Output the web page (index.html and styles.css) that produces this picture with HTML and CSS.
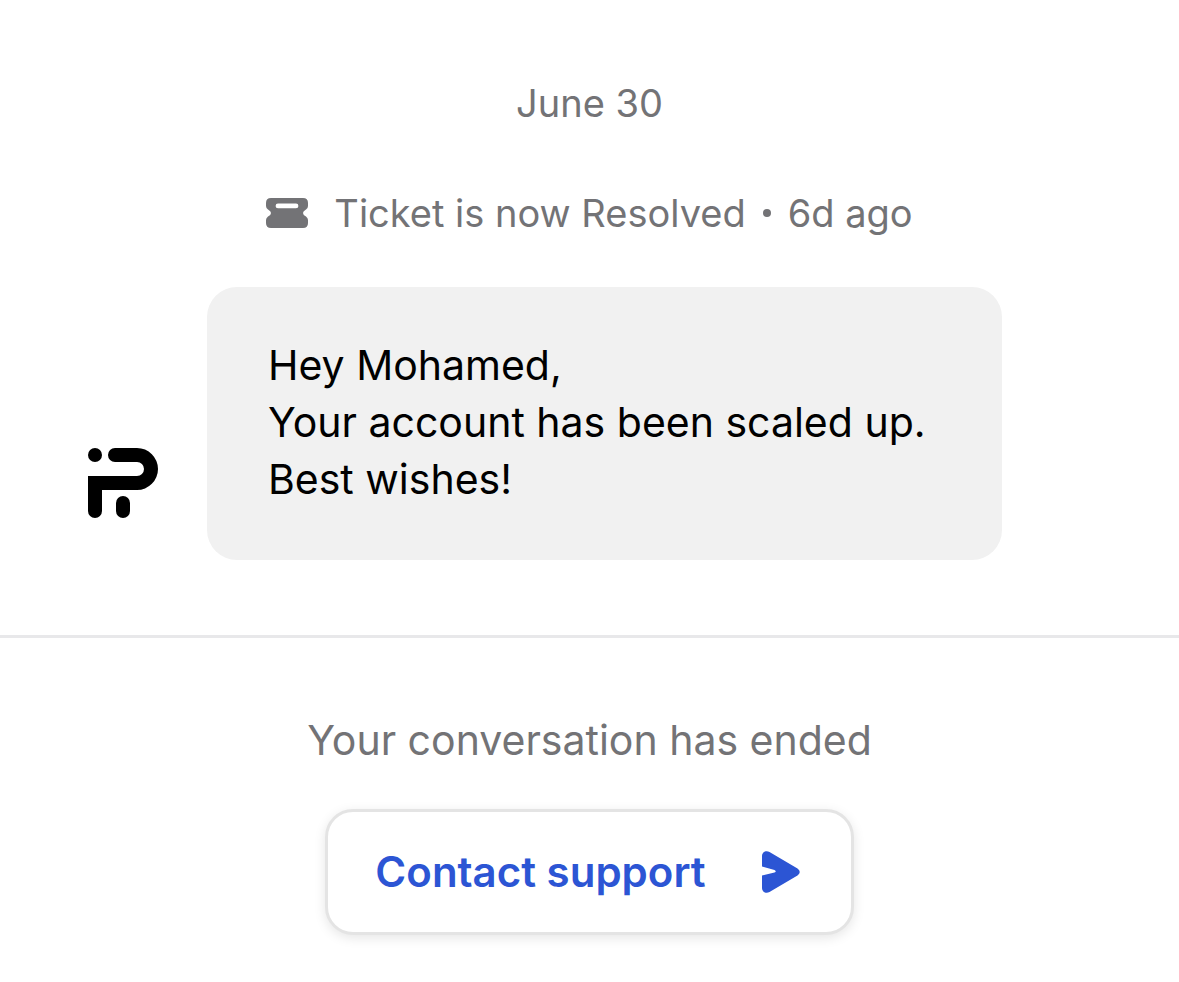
FILE: index.html
```html
<!DOCTYPE html>
<html lang="en">
<head>
    <meta charset="UTF-8">
    <meta name="viewport" content="width=device-width, initial-scale=1.0">
    <title>Support conversation</title>
    <link rel="stylesheet" href="styles.css">
</head>
<body>
    <main class="conversation">
        <p class="date">June 30</p>

        <p class="status">
            <svg class="ticket-icon" viewBox="0 0 42 30" aria-hidden="true">
                <path fill="currentColor" fill-rule="evenodd" d="M5 0H37Q42 0 42 5V8Q42 10 40 11.500Q37 13 37 15T40 18.500Q42 20 42 22V25Q42 30 37 30H5Q0 30 0 25V22Q0 20 2 18.500Q5 17 5 15T2 11.500Q0 10 0 8V5Q0 0 5 0ZM12 5.500A2.400 2.400 0 0 0 12 10.300H30A2.400 2.400 0 0 0 30 5.500Z"/>
            </svg>
            <span>Ticket is now Resolved</span>
            <span class="dot"></span>
            <span>6d ago</span>
        </p>

        <div class="message">
            <svg class="avatar" viewBox="0 0 70 70" role="img" aria-label="Support team">
                <circle cx="7" cy="7" r="7"/>
                <path d="M27 0H49A21 21 0 0 1 49 42H14V63A7 7 0 0 1 0 63V28H49A7 7 0 0 0 49 14H27A7 7 0 0 1 27 0Z"/>
                <rect x="28" y="48" width="14" height="22" rx="7"/>
            </svg>
            <div class="bubble">
                <p>Hey Mohamed,</p>
                <p>Your account has been scaled up.</p>
                <p>Best wishes!</p>
            </div>
        </div>
    </main>

    <footer class="ended">
        <p class="ended-text">Your conversation has ended</p>
        <button type="button" class="contact-button">
            Contact support
            <svg class="send-icon" viewBox="0 0 38 42" aria-hidden="true">
                <path fill="currentColor" d="M0 5C0 1 4 -1 7.500 1L35.500 17.500Q40 21 35.500 24.500L7.500 41C4 43 0 41 0 37V24.500L12.500 21.500Q15 20.500 12.500 19L0 15.500Z"/>
            </svg>
        </button>
    </footer>
</body>
</html>
```
FILE: styles.css
```css
body {
    margin: 0;
    background: #fff;
    color: #000;
    font-family: Inter, "Liberation Sans", sans-serif;
}

p {
    margin: 0;
}

.conversation {
    padding: 78px 88px 75px;
    border-bottom: 3px solid #e8e8ea;
}

.date {
    color: #737376;
    font-size: 38px;
    line-height: 50px;
    text-align: center;
}

.status {
    display: flex;
    align-items: center;
    justify-content: center;
    margin-top: 60px;
    color: #737376;
    font-size: 38px;
    line-height: 50px;
}

.ticket-icon {
    width: 42px;
    height: 30px;
    margin-right: 26px;
}

.dot {
    width: 8px;
    height: 8px;
    margin: 0 17px;
    border-radius: 50%;
    background: currentColor;
}

.message {
    display: flex;
    align-items: flex-end;
    gap: 49px;
    margin-top: 49px;
}

.avatar {
    flex: none;
    width: 70px;
    height: 70px;
    margin-bottom: 42px;
}

.bubble {
    box-sizing: border-box;
    max-width: 795px;
    flex: 1;
    padding: 50px 61px 52px;
    border-radius: 30px;
    background: #f1f1f1;
    font-size: 41px;
    line-height: 57px;
}

.ended {
    display: flex;
    flex-direction: column;
    align-items: center;
    padding: 77px 24px 47px;
}

.ended-text {
    color: #737376;
    font-size: 41px;
    line-height: 50px;
}

.contact-button {
    display: flex;
    align-items: center;
    gap: 56px;
    margin-top: 44px;
    padding: 34px 51px 34px 47px;
    border: 3px solid #e4e4e4;
    border-radius: 28px;
    background: #fff;
    box-shadow: 0 3px 12px rgba(0, 0, 0, 0.1);
    color: #2c55d4;
    font: inherit;
    font-size: 42px;
    font-weight: 600;
    line-height: 52px;
    cursor: pointer;
}

.send-icon {
    width: 38px;
    height: 42px;
}
```
